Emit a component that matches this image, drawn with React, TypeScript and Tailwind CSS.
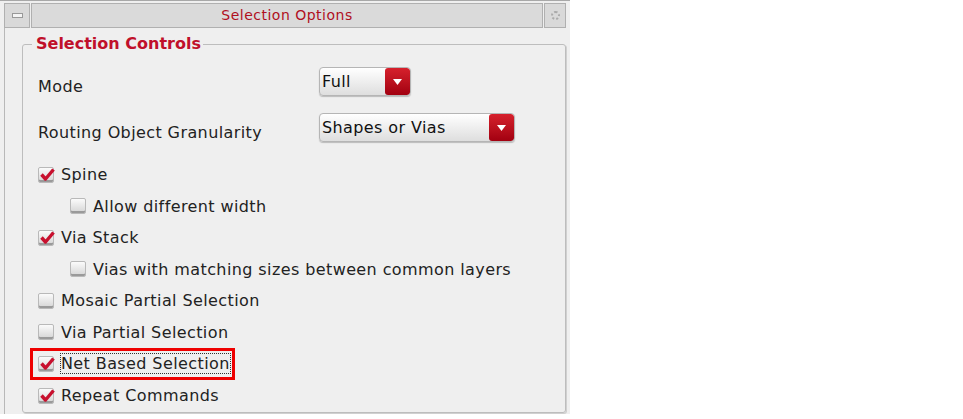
import React from 'react';

const font = { fontFamily: '"DejaVu Sans", Verdana, sans-serif' };

const Check = ({ checked }: { checked: boolean }) => (
  <span className="relative inline-block w-[16px] h-[16px] shrink-0 rounded-[2px] border border-[#b9b9b9] bg-gradient-to-b from-[#fbfbfb] to-[#d4d4d4] shadow-[inset_0_-2px_0_#9a9a9a]">
    {checked && (
      <svg className="absolute left-[1px] top-[0px]" width="15" height="14" viewBox="0 0 15 14">
        <path d="M1.5 6.5 L5.5 11 L13.5 1.5" fill="none" stroke="#c8102e" strokeWidth="3.4" strokeLinejoin="round" />
      </svg>
    )}
  </span>
);

const Row = ({ label, checked, indent, focus }: { label: string; checked: boolean; indent?: boolean; focus?: boolean }) => (
  <div className={`flex items-center gap-[7px] h-[31.5px] ${indent ? 'pl-[47px]' : 'pl-[15px]'}`}>
    <Check checked={checked} />
    <span className={`text-[16px] tracking-[0.4px] text-[#222] leading-[19px] ${focus ? 'outline-1 outline-dotted outline-[#333] outline-offset-0' : ''}`}>{label}</span>
  </div>
);

const Combo = ({ value, width }: { value: string; width: string }) => (
  <div className={`flex h-[29px] ${width} rounded-[4px] border border-[#b5b5b5] bg-gradient-to-b from-[#ffffff] to-[#dedede] shadow-[0_1px_1px_#bbb] overflow-hidden`}>
    <span className="flex-1 pl-[2px] text-[16px] tracking-[0.4px] leading-[27px] text-[#111]">{value}</span>
    <span className="flex w-[25px] items-center justify-center rounded-[3px] bg-gradient-to-b from-[#d6202c] to-[#a20010]">
      <svg width="9" height="6" viewBox="0 0 9 6"><path d="M0 0 H9 L4.5 6 Z" fill="#fff" /></svg>
    </span>
  </div>
);

export default function App() {
  return (
    <div className="w-[963px] h-[419px] bg-white" style={font}>
      <div className="w-[570px] h-[414px] bg-[#efefef] border-t border-[#a8a8a8] flex flex-col">
        {/* Title bar */}
        <div className="flex h-[25px] mt-[2px] px-[4px] gap-[1px]">
          <div className="w-[26px] flex items-center justify-center bg-[#d9d9d9] border border-[#b0b0b0]">
            <span className="block w-[11px] h-[5px] border border-[#999] bg-[#f4f4f4]" />
          </div>
          <div className="flex-1 bg-[#dadada] border border-[#b0b0b0] flex items-center justify-center text-[14px] tracking-[0.5px] text-[#b0101e]">
            Selection Options
          </div>
          <div className="w-[22px] flex items-center justify-center bg-[#d9d9d9] border border-[#b0b0b0]">
            <span className="block w-[9px] h-[9px] rounded-full border-2 border-dotted border-[#aaa]" />
          </div>
        </div>

        {/* Body */}
        <div className="flex-1 border-l border-[#b8b8b8] ml-[4px] pl-[17px] pr-[4px] pt-[16px]">
          <div className="relative h-[369px] border border-[#bdbdbd] rounded-[3px] shadow-[1px_1px_0_#d0d0d0]">
            <span className="absolute left-[9px] top-[-11px] bg-[#efefef] pl-[4px] pr-[2px] text-[16px] font-bold leading-[19px] text-[#c0102a]">
              Selection Controls
            </span>

            <div className="pt-[20px]">
              <div className="flex items-center h-[33px] pl-[15px]">
                <span className="w-[281px] text-[16px] tracking-[0.4px] text-[#222] pt-[10px]">Mode</span>
                <Combo value="Full" width="w-[92px]" />
              </div>
              <div className="flex items-center h-[33px] mt-[13px] pl-[15px]">
                <span className="w-[281px] text-[16px] tracking-[0.4px] text-[#222] pt-[10px]">Routing Object Granularity</span>
                <Combo value="Shapes or Vias" width="w-[196px]" />
              </div>

              <div className="mt-[15px]">
                <Row label="Spine" checked />
                <Row label="Allow different width" checked={false} indent />
                <Row label="Via Stack" checked />
                <Row label="Vias with matching sizes between common layers" checked={false} indent />
                <Row label="Mosaic Partial Selection" checked={false} />
                <Row label="Via Partial Selection" checked={false} />
                <div className="ml-[7px] w-[205px] h-[32px] border-[3px] border-[#ee0000]">
                  <div className="-ml-[10px] -mt-[3px]">
                    <Row label="Net Based Selection" checked focus />
                  </div>
                </div>
                <Row label="Repeat Commands" checked />
              </div>
            </div>
          </div>
        </div>
      </div>
    </div>
  );
}
